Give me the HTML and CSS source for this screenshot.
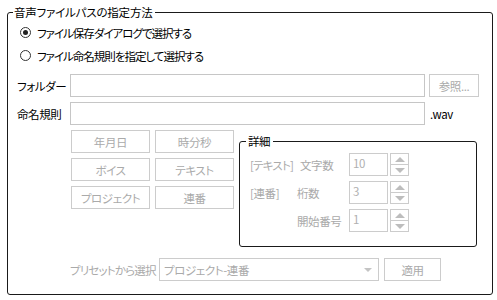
FILE: index.html
```html
<!DOCTYPE html>
<html lang="ja">
<head>
<meta charset="utf-8">
<link rel="stylesheet" href="styles.css">
</head>
<body>
<div class="group">
  <span class="group-title">音声ファイルパスの指定方法</span>
  <div class="radios">
    <label class="radio-row"><span class="radio checked"></span><span class="radio-text">ファイル保存ダイアログで選択する</span></label>
    <label class="radio-row"><span class="radio"></span><span class="radio-text">ファイル命名規則を指定して選択する</span></label>
  </div>
  <div class="field-row first">
    <span class="field-label">フォルダー</span>
    <span class="textbox"></span>
    <span class="btn disabled browse">参照...</span>
  </div>
  <div class="field-row">
    <span class="field-label">命名規則</span>
    <span class="textbox"></span>
    <span class="ext">.wav</span>
  </div>
  <div class="middle">
    <div class="token-grid">
      <span class="btn disabled">年月日</span>
      <span class="btn disabled">時分秒</span>
      <span class="btn disabled">ボイス</span>
      <span class="btn disabled">テキスト</span>
      <span class="btn disabled">プロジェクト</span>
      <span class="btn disabled">連番</span>
    </div>
    <div class="detail">
      <span class="detail-title">詳細</span>
      <div class="detail-grid">
        <span class="dlabel tight">[テキスト]</span>
        <span class="dlabel shift">文字数</span>
        <div class="spin"><span class="spin-box">10</span><span class="spin-btns"><span class="up"></span><span class="down"></span></span></div>
        <span class="dlabel">[連番]</span>
        <span class="dlabel">桁数</span>
        <div class="spin"><span class="spin-box">3</span><span class="spin-btns"><span class="up"></span><span class="down"></span></span></div>
        <span class="dlabel"></span>
        <span class="dlabel">開始番号</span>
        <div class="spin"><span class="spin-box">1</span><span class="spin-btns"><span class="up"></span><span class="down"></span></span></div>
      </div>
    </div>
  </div>
  <div class="preset-row">
    <span class="preset-label">プリセットから選択</span>
    <span class="combo"><span>プロジェクト-連番</span><span class="combo-arrow"></span></span>
    <span class="btn disabled apply">適用</span>
  </div>
</div>
</body>
</html>
```

FILE: styles.css
```css
html, body {
  margin: 0;
  padding: 0;
  background: #ffffff;
}
body {
  font-family: "Noto Sans CJK JP", "Noto Sans", sans-serif;
  font-size: 11.5px;
  letter-spacing: -0.4px;
  font-feature-settings: "palt";
  white-space: nowrap;
  color: #000;
  width: 497px;
  height: 300px;
  overflow: hidden;
}
.group {
  position: relative;
  margin: 12px 0 0 7px;
  height: 281px;
  border: 1px solid #1a1a1a;
  border-radius: 3px;
  padding: 0 0 0 9px;
  box-sizing: content-box;
  width: 475px;
}
.group-title {
  position: absolute;
  top: -9px;
  left: 5px;
  background: #fff;
  padding: 0 3px 0 1px;
  line-height: 16px;
  letter-spacing: -0.2px;
}
.radios {
  padding-top: 8px;
}
.radio-row {
  display: flex;
  align-items: center;
  height: 23px;
  gap: 6px;
  padding-left: 3px;
}
.radio-text {
  letter-spacing: -1px;
}
.radio {
  width: 11px;
  height: 11px;
  border: 1px solid #333;
  border-radius: 50%;
  display: flex;
  align-items: center;
  justify-content: center;
  box-sizing: border-box;
  flex: none;
}
.radio.checked::after {
  content: "";
  width: 5px;
  height: 5px;
  border-radius: 50%;
  background: #222;
}
.field-row {
  display: flex;
  align-items: center;
  height: 23px;
  margin-top: 5px;
}
.field-row.first {
  margin-top: 7px;
}
.field-label {
  width: 53px;
  flex: none;
}
.textbox {
  width: 355px;
  height: 23px;
  border: 1px solid #c6c6c6;
  box-sizing: border-box;
  flex: none;
}
.btn {
  display: flex;
  align-items: center;
  justify-content: center;
  height: 23px;
  border: 1px solid #cccccc;
  box-sizing: border-box;
  color: #aaaaaa;
}
.browse {
  width: 50px;
  margin-left: 4px;
}
.ext {
  margin-left: 5px;
}
.middle {
  display: flex;
  margin-top: 5px;
  padding-left: 54px;
  align-items: flex-start;
}
.token-grid {
  display: grid;
  grid-template-columns: 79px 79px;
  grid-auto-rows: 23px;
  column-gap: 5px;
  row-gap: 5px;
}
.detail {
  position: relative;
  margin-top: 11px;
  margin-left: 5px;
  width: 238px;
  height: 106px;
  border: 1px solid #1a1a1a;
  border-radius: 3px;
  box-sizing: border-box;
  padding: 11px 0 0 10px;
}
.detail-title {
  position: absolute;
  top: -9px;
  left: 6px;
  background: #fff;
  padding: 0 3px 0 2px;
  line-height: 16px;
}
.detail-grid {
  display: grid;
  grid-template-columns: 47px 52px auto;
  grid-auto-rows: 23px;
  row-gap: 5px;
  align-items: center;
  color: #aaaaaa;
}
.dlabel.tight {
  letter-spacing: -0.8px;
}
.dlabel.shift {
  padding-left: 3px;
}
.spin {
  display: flex;
  gap: 2px;
  height: 23px;
}
.spin-box {
  width: 39px;
  height: 23px;
  border: 1px solid #cccccc;
  box-sizing: border-box;
  padding: 1px 0 0 3px;
  line-height: 16px;
  color: #b0b0b0;
}
.spin-btns {
  width: 19px;
  height: 23px;
  border: 1px solid #cccccc;
  box-sizing: border-box;
  display: flex;
  flex-direction: column;
}
.spin-btns .up,
.spin-btns .down {
  flex: 1;
  display: flex;
  align-items: center;
  justify-content: center;
}
.spin-btns .up {
  border-bottom: 1px solid #cccccc;
}
.spin-btns .up::after {
  content: "";
  border-left: 5px solid transparent;
  border-right: 5px solid transparent;
  border-bottom: 5px solid #bdbdbd;
}
.spin-btns .down::after {
  content: "";
  border-left: 5px solid transparent;
  border-right: 5px solid transparent;
  border-top: 5px solid #bdbdbd;
}
.preset-row {
  display: flex;
  align-items: center;
  height: 23px;
  margin-top: 11px;
  padding-left: 53px;
  color: #aaaaaa;
}
.preset-label {
  width: 89px;
  flex: none;
  letter-spacing: -0.8px;
}
.combo {
  width: 220px;
  height: 23px;
  border: 1px solid #cccccc;
  box-sizing: border-box;
  display: flex;
  align-items: center;
  justify-content: space-between;
  padding: 0 6px 0 4px;
}
.combo-arrow {
  border-left: 4px solid transparent;
  border-right: 4px solid transparent;
  border-top: 4px solid #c4c4c4;
}
.apply {
  width: 57px;
  margin-left: 5px;
}
```
